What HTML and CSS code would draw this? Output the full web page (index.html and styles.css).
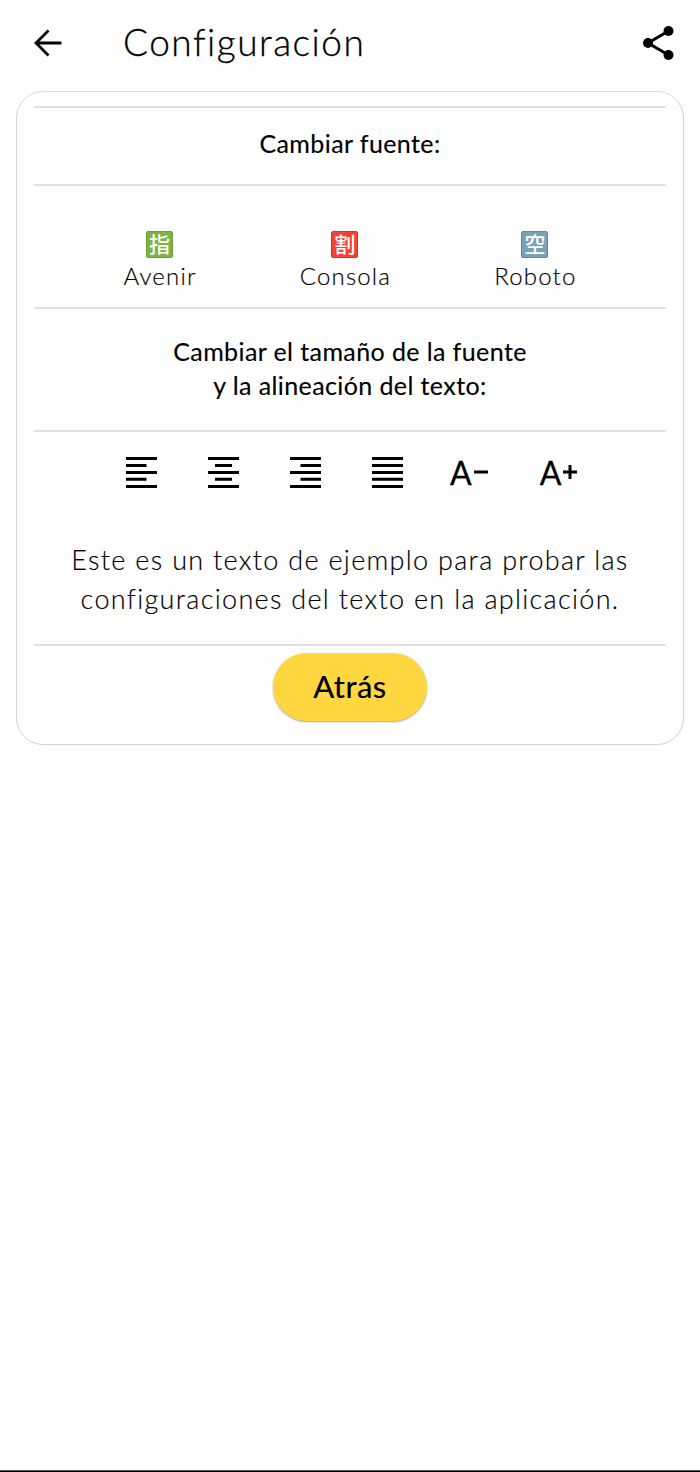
FILE: index.html
```html
<!DOCTYPE html>
<html lang="es">
<head>
<meta charset="utf-8">
<title>Configuración</title>
<link rel="stylesheet" href="styles.css">
</head>
<body>
<div class="screen">
  <header class="topbar">
    <svg class="back" width="28" height="28" viewBox="0 0 28 28" fill="none" stroke="#000" stroke-width="2.800"><path d="M27.500 14H3M14.500 1.500L2 14L14.500 26.500"/></svg>
    <h1 class="title">Configuración</h1>
    <svg class="share" width="32" height="36" viewBox="0 0 32 36"><path d="M25.500 6L5 18L25.500 30" fill="none" stroke="#000" stroke-width="3"/><circle cx="25.500" cy="6" r="5"/><circle cx="5" cy="18" r="5"/><circle cx="25.500" cy="30" r="5"/></svg>
  </header>
  <main class="card">
    <section class="row row-heading"><h2 class="heading">Cambiar fuente:</h2></section>
    <section class="row fonts">
      <div class="font"><span class="tile green">指</span><span class="label">Avenir</span></div>
      <div class="font"><span class="tile red">割</span><span class="label">Consola</span></div>
      <div class="font"><span class="tile blue">空</span><span class="label">Roboto</span></div>
    </section>
    <section class="row row-size"><h2 class="heading">Cambiar el tamaño de la fuente<br>y la alineación del texto:</h2></section>
    <section class="row preview">
      <div class="tools">
        <svg width="31" height="31" viewBox="0 0 31 31"><path d="M0 0h31v3H0zM0 7h20.500v3H0zM0 14h31v3H0zM0 20.800h20.500v3H0zM0 28h31v3H0z"/></svg>
        <svg width="31" height="31" viewBox="0 0 31 31"><path d="M0 0h31v3H0zM7 7h17v3H7zM0 14h31v3H0zM7 20.800h17v3H7zM0 28h31v3H0z"/></svg>
        <svg width="31" height="31" viewBox="0 0 31 31"><path d="M0 0h31v3H0zM10.500 7H31v3H10.500zM0 14h31v3H0zM10.500 20.800H31v3H10.500zM0 28h31v3H0z"/></svg>
        <svg width="31" height="31" viewBox="0 0 31 31"><path d="M0 0h31v3H0zM0 7h31v3H0zM0 14h31v3H0zM0 20.800h31v3H0zM0 28h31v3H0z"/></svg>
        <span class="zoom">A<svg width="14" height="14" viewBox="0 0 14 14"><path d="M0 5.500h14v3H0z"/></svg></span>
        <span class="zoom">A<svg width="14" height="14" viewBox="0 0 14 14"><path d="M0 5.500h14v3H0zM5.500 0h3v14h-3z"/></svg></span>
      </div>
      <p class="sample">Este es un texto de ejemplo para probar las<br>configuraciones del texto en la aplicación.</p>
    </section>
    <section class="row actions"><button class="button">Atrás</button></section>
  </main>
  <div class="navline"></div>
</div>
</body>
</html>
```
FILE: styles.css
```css
* { box-sizing: border-box; }
body { margin: 0; background: #fefefe; color: #000; font-family: Lato, "Noto Sans", sans-serif; }
.screen { height: 1472px; display: flex; flex-direction: column; }
.topbar { height: 91px; flex: none; display: flex; align-items: flex-start; padding: 25px 25px 0 34px; }
.back { margin-top: 4px; }
.title { margin: -7px auto 0 61px; font-size: 37px; line-height: 48px; font-weight: 300; letter-spacing: 1.5px; white-space: nowrap; -webkit-text-stroke: 0.3px #000; }
.card { height: 654px; flex: none; margin: 0 16px; padding: 14px 17px 0; border: 1px solid #d2d2d2; border-top-color: #dedede; border-radius: 27px; }
.row { border-top: 2px solid #e0e0e0; }
.row-heading { height: 78px; padding-top: 18px; }
.heading { margin: 0; font-size: 25px; line-height: 34px; font-weight: 400; text-align: center; white-space: nowrap; letter-spacing: 0.4px; -webkit-text-stroke: 0.15px #000; }
.fonts { height: 123px; padding: 45px 1px 0 0; display: flex; justify-content: center; gap: 104px; }
.font { display: flex; flex-direction: column; align-items: center; }
.tile { width: 27px; height: 27px; border: 1px solid; border-radius: 2px; color: #fff; font: 500 21px/23px "Noto Sans CJK JP", sans-serif; text-align: center; }
.green { background: #7cb342; border-color: #689f38; }
.red { background: #f44336; border-color: #c9372e; }
.blue { background: #78a3b7; border-color: #5b8ca3; }
.label { font-size: 24px; line-height: 34px; font-weight: 300; letter-spacing: 1.2px; margin: 1px -1px 0 0; -webkit-text-stroke: 0.15px #000; }
.row-size { height: 123px; padding-top: 25px; }
.preview { height: 214px; padding-top: 25px; }
.tools { display: flex; height: 32px; gap: 51px; padding-left: 92px; }
.tools > svg { flex: none; }
.zoom { display: flex; align-items: center; gap: 2px; font-size: 32px; line-height: 32px; margin-left: -4px; -webkit-text-stroke: 0.3px #000; }
.zoom + .zoom { margin-left: 1px; }
.zoom svg { margin-top: -2px; }
.sample { margin: 51px 0 0; font-size: 27px; line-height: 39px; font-weight: 300; text-align: center; white-space: nowrap; letter-spacing: 1.3px; -webkit-text-stroke: 0.15px #000; }
.actions { padding-top: 7px; display: flex; justify-content: center; }
.button { width: 154px; height: 68px; padding: 0 0 2px; border: 0; border-radius: 34px; background: #fed640; color: #000; font: 400 31px/66px Lato, sans-serif; letter-spacing: 0.5px; box-shadow: 0 1px 2px rgba(0,0,0,.35); -webkit-text-stroke: 0.2px #000; }
.navline { height: 2px; margin-top: auto; background: #000; border-top: 1px solid #555; }
```
